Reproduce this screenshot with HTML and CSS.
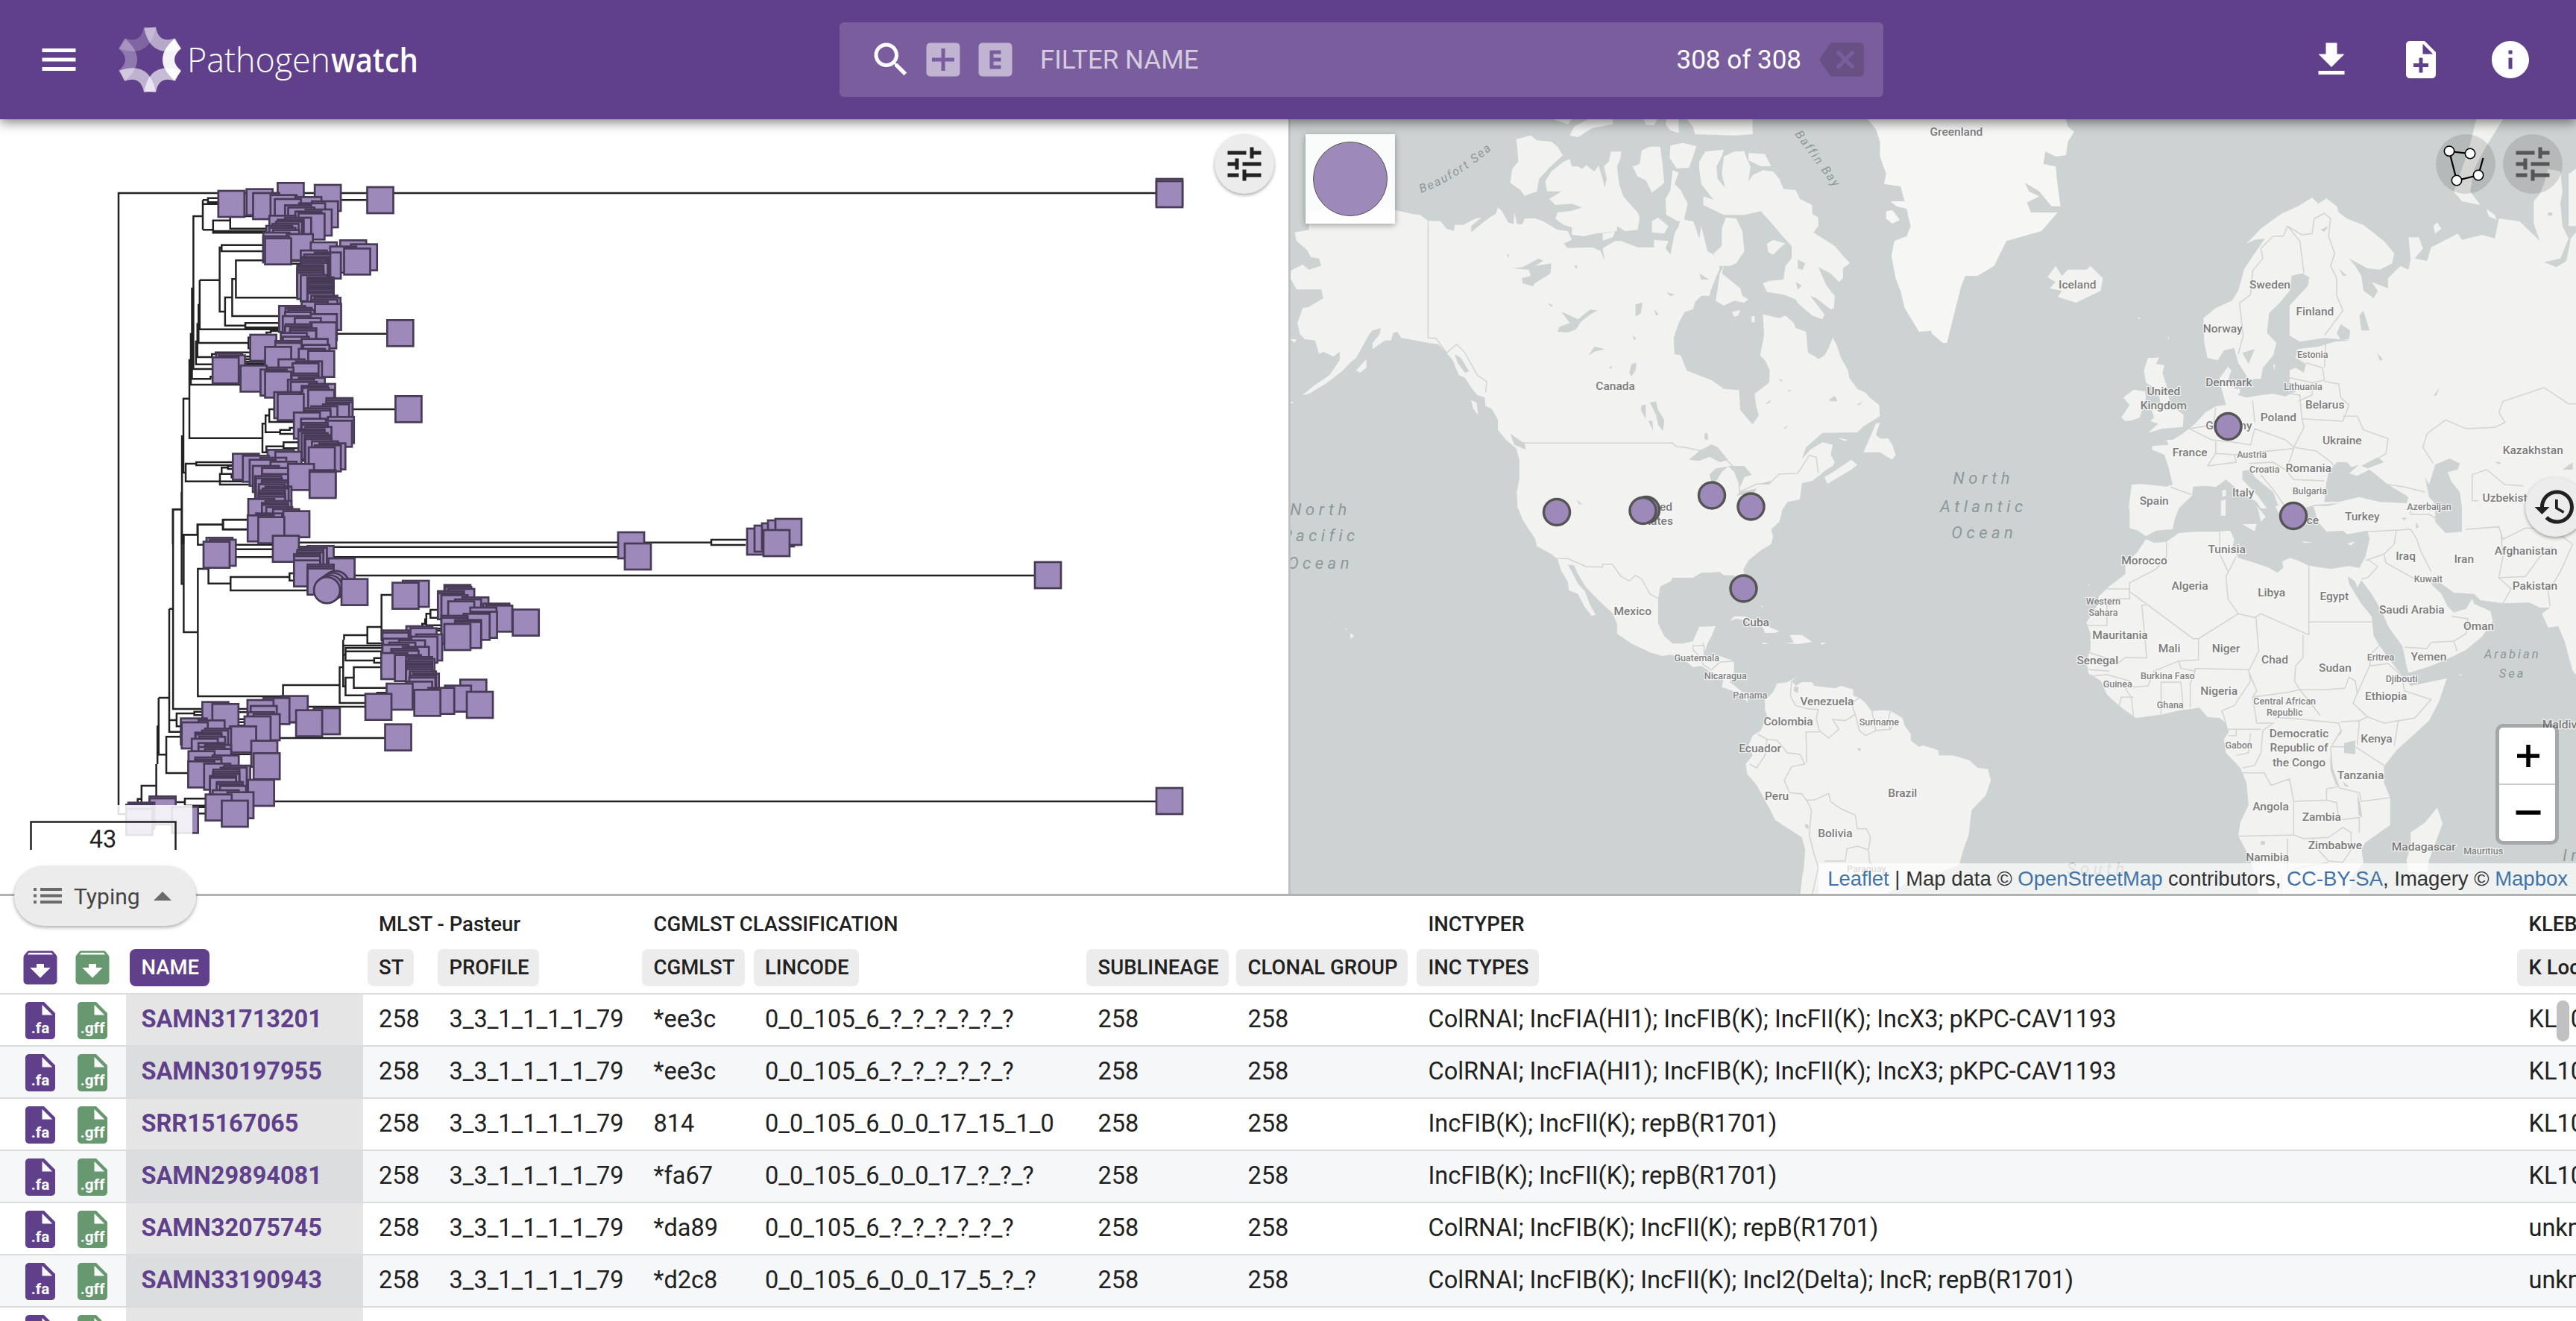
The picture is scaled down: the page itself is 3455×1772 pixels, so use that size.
FILE: index.html
```html
<!DOCTYPE html>
<html lang="en">
<head>
<meta charset="utf-8">
<title>Pathogenwatch</title>
<link rel="stylesheet" href="styles.css">
</head>
<body>
<header class="topbar">
  <svg class="icon menu" viewBox="0 0 24 24"><path d="M3 18h18v-2H3v2zm0-5h18v-2H3v2zm0-7v2h18V6H3z"/></svg>
  <svg class="logo" viewBox="155 30 410 100">
    <g fill="#fff">
      <path opacity=".3" d="M159 65Q177 80 159 95L168 108Q200 80 168 52Z"/>
      <path opacity=".2" transform="rotate(60 201 80)" d="M159 65Q177 80 159 95L168 108Q200 80 168 52Z"/>
      <path opacity=".55" transform="rotate(120 201 80)" d="M159 65Q177 80 159 95L168 108Q200 80 168 52Z"/>
      <path opacity=".93" transform="rotate(180 201 80)" d="M159 65Q177 80 159 95L168 108Q200 80 168 52Z"/>
      <path opacity=".65" transform="rotate(240 201 80)" d="M159 65Q177 80 159 95L168 108Q200 80 168 52Z"/>
      <path opacity=".6" transform="rotate(300 201 80)" d="M159 65Q177 80 159 95L168 108Q200 80 168 52Z"/>
    </g>
    <text class="brand thin" x="251" y="97" textLength="192" lengthAdjust="spacingAndGlyphs">Pathogen</text>
    <text class="brand strong" x="444" y="97" textLength="117" lengthAdjust="spacingAndGlyphs">watch</text>
  </svg>
  <div class="search">
    <svg class="icon" viewBox="0 0 24 24"><path d="M15.5 14h-.79l-.28-.27C15.41 12.59 16 11.11 16 9.5 16 5.91 13.09 3 9.5 3S3 5.91 3 9.5 5.91 16 9.5 16c1.61 0 3.09-.59 4.23-1.57l.27.28v.79l5 4.99L20.49 19l-4.99-5zm-6 0C7.01 14 5 11.99 5 9.5S7.01 5 9.5 5 14 7.01 14 9.5 11.99 14 9.5 14z"/></svg>
    <svg class="icon key" viewBox="0 0 24 24"><path fill-rule="evenodd" d="M5 3h14a2 2 0 0 1 2 2v14a2 2 0 0 1-2 2H5a2 2 0 0 1-2-2V5a2 2 0 0 1 2-2zM11 6v5H6v2h5v5h2v-5h5v-2h-5V6z"/></svg>
    <svg class="icon key" viewBox="0 0 24 24"><path fill-rule="evenodd" d="M5 3h14a2 2 0 0 1 2 2v14a2 2 0 0 1-2 2H5a2 2 0 0 1-2-2V5a2 2 0 0 1 2-2zM9 7v10h6v-2h-4v-2h4v-2h-4V9h4V7z"/></svg>
    <span class="placeholder">FILTER NAME</span>
    <span class="count">308 of 308</span>
    <svg class="icon clear" viewBox="0 0 24 24"><path d="M22 3H7c-.69 0-1.12.35-1.5.88L0 12l5.5 8.11c.38.53.81.89 1.5.89h15a2 2 0 0 0 2-2V5a2 2 0 0 0-2-2m-3 12.59L17.59 17 14 13.41 10.41 17 9 15.59 12.59 12 9 8.41 10.41 7 14 10.59 17.59 7 19 8.41 15.41 12"/></svg>
  </div>
  <nav class="actions">
    <svg class="icon" viewBox="0 0 24 24"><path d="M19 9h-4V3H9v6H5l7 7 7-7zM5 18v2h14v-2H5z"/></svg>
    <svg class="icon" viewBox="0 0 24 24"><path d="M14 2H6c-1.1 0-1.99.9-1.99 2L4 20c0 1.1.89 2 1.99 2H18c1.1 0 2-.9 2-2V8l-6-6zm2 14h-3v3h-2v-3H8v-2h3v-3h2v3h3v2zm-3-7V3.5L18.500 9H13z"/></svg>
    <svg class="icon" viewBox="0 0 24 24"><path d="M12 2C6.480 2 2 6.480 2 12s4.480 10 10 10 10-4.480 10-10S17.520 2 12 2zm1 15h-2v-6h2v6zm0-8h-2V7h2v2z"/></svg>
  </nav>
</header>

<main class="panes">
  <section class="tree">
    <svg class="canvas" viewBox="0 160 1728 1039">
      <g class="branches">
        <path d="M1551 259H159V1092H172M402 727.700H954V724H1005M954 727.700V731H1000M402 733.700H830M430 747.300H838M460 772H1388M365 1075H1551"/>
        <path transform="translate(140 230) scale(.38265 .33333)" d="M345 115V235M345 180H312V467M345 115H363V107H398M363 115V124H398M345 131H398M490 88V180H520M345 235H381V247H560M381 235V197H441V185M441 197V230H566M381 240H566M307 467V650M303 650V858H480M312 467V795H380M307 650V835H372V826H380M334 437V635H610M334 437H404V306H411V296H556M411 306V321H556M404 437V564H423V507H448V433H461V358H556M461 433V508H680M448 507V582H611M423 564V620H494V610H611M494 620V628H611M330 533V690H505V668H510M505 690V712H510M326 610V747H377V735H390V728H510M321 680V776H380M298 755V1073H554V1015H565V982H578V957H595M578 982V1008H663M565 1015V1049H616V1040H650V1032H663M616 1049V1056H663M554 1073V1130H570M568 1130V1106H628V1090H680M628 1106V1114H680M298 914H277V1212H285V1176H322V1170H449M322 1176V1182H449M285 1212V1247H484M405 1247V1217H411V1192H433V1185H449M411 1217H446V1235M433 1192V1197H449M405 1247V1260H510M272 1062V1500M272 1360H240V1500M277 1500V1462H326V1421H415V1402H503M415 1421V1440H503M568 655V648H583V642H611M829 115H920M815 653H990M870 957H1019M490 745H562M490 755H562M490 765H562M490 773H562M655 360H690M655 371H690M690 1163H703"/>
        <path transform="translate(140 660) scale(.39541 .33333)" d="M262 0V370H269M269 172V564H317V309H353V368H428V342H628V327H642M628 342V356H642M428 368V396H690M269 172H317V131H403V111H486M403 131V151H486M317 172V212H345M440 212H570M440 230H570M440 262H570M660 221H690M233 70V873H331M262 70H233M220 470V965H260M233 470H220M184 828V1057H210V985H258M210 1057V1131H283M220 828H184M220 918H245V891H305V884H331M305 891V898H331M245 918V943H260M180 943V1095M176 1095V1222M184 943H178M176 1182H126V1235H113V1250M126 1235V1250M317 564V822H606V777H798V705H810V595M798 705V849H884M810 595V782H818V747H846V705H938M846 747V788H956M818 782V818H884M810 655H818V628H942M818 655V678H915V668H938M915 678V687H938M818 641H942M810 618H942M813 595V576H892V543H940V414H974M892 576V609H942M940 543V600M690 864H884M595 990H951M455 873H484M455 886H484M455 914H474M455 926H474M455 940H474M432 1055H497M625 928H650M1078 540V530H1088V512H1092V490H1106V474H1130M1106 490V506H1130M1092 512V536H1142M1120 550H1142M1120 558H1142M242 1248H273V1234H342M273 1248V1262H342M300 1268H342M300 1294H342M925 812V808H956"/>
      </g>
      <g id="leaves" class="leaves"></g>
      <rect class="veil" x="0" y="1080" width="258" height="72"/>
      <path class="scale" d="M41.500 1140V1102.500H235.500V1140"/>
      <text class="scale-text" x="138" y="1137">43</text>
    </svg>
    <div class="round tree-settings"><svg class="icon" viewBox="0 0 24 24"><path d="M3 17v2h6v-2H3zM3 5v2h10V5H3zm10 16v-2h8v-2h-8v-2h-2v6h2zM7 9v2H3v2h4v2h2V9H7zm14 4v-2H11v2h10zm-6-4h2V7h4V5h-4V3h-2v6z"/></svg></div>
  </section>

  <section class="map">
    <svg class="canvas" viewBox="1731 160 1724 1039">
      <g class="land" transform="translate(1728 160) scale(.55102 .33333)">
        <path d="M50 370V445L15 455L20 490L45 525L55 555L75 560L80 590L50 605L35 585L10 605L2 615L5 640L20 685L80 685L85 720L50 755L35 760L22 820L28 865L40 885L65 890L75 945L85 935L110 955L125 935L125 970L100 1030L60 1075L35 1110L50 1105L90 1065L130 1015L150 980L165 960L175 930L185 900L195 870L205 850L225 840L222 865L205 900L205 925L235 890L250 890L255 860L265 855L275 880L310 890L340 900L365 905L385 940L400 970L415 1030L430 1040L445 1080L460 1110L478 1120L480 1155L495 1165L510 1210L510 1250L530 1290L555 1325L562 1370L562 1450L556 1500L558 1566L1205 1566L1215 1540L1245 1530L1250 1465L1275 1455L1295 1430L1305 1415L1325 1395L1330 1380L1320 1350L1325 1310L1300 1300L1270 1330L1250 1368L1260 1320L1300 1262L1385 1260L1400 1235L1440 1195L1438 1150L1415 1120L1405 1100L1385 1085L1365 1040L1362 1010L1345 960L1335 910L1325 880L1315 920L1305 950L1290 965L1278 950L1265 940L1262 890L1260 855L1235 840L1230 820L1210 790L1195 800L1155 785L1158 870L1148 950L1160 970L1172 1010L1170 1060L1135 1105L1138 1150L1145 1190L1130 1228L1120 1210L1100 1170L1097 1090L1060 1085L1030 1050L970 1012L955 950L940 945L938 880L950 820L965 775L985 765L990 735L1005 710L1025 710L1030 680L1050 600L1035 545L1020 530L1005 430L1000 480L990 430L985 410L965 405L960 370L950 430L940 460L930 545L918 520L925 490L890 485L890 515L850 515L810 490L795 490L765 520L770 570L760 530L740 515L680 518L670 500L690 485L680 450L655 445L620 410L600 398L575 400L570 422L557 422L550 375L548 422L535 415L520 370L510 355L505 380L490 395L470 420L445 455L445 430L470 395L455 400L425 425L405 425L403 450L385 440L370 410L340 408L320 385L300 380L230 355Z"/>
        <path d="M685 160L690 190L705 190L715 200L725 185L745 210L755 185L765 240L770 275L775 240L768 190L780 170L785 130L810 130L808 160L800 190L805 260L815 310L850 375L855 395L850 445L820 450L800 430L800 450L750 460L720 470L690 465L690 435L670 425L650 400L655 375L690 368L715 355L690 340L650 345L635 320L665 290L630 290L625 250L640 210L670 170ZM555 80L590 65L605 85L640 90L655 110L668 145L635 195L610 240L605 290L575 308L565 285L540 255L545 200L560 170ZM855 180L838 190L850 230L870 245L885 295L905 270L915 255L910 170L905 110L880 110L860 125ZM930 105L960 95L993 108L985 150L975 195L945 198L928 155ZM935 205L950 215L940 260L955 285L972 340L965 390L950 412L920 385L918 320L930 285ZM1120 135L1160 140L1175 188L1150 190L1120 165ZM1065 395L1090 400L1105 450L1110 530L1090 580L1075 590L1045 590L1035 540L1055 510L1055 440ZM1060 590L1055 620L1100 680L1105 710L1120 725L1110 738L1085 730L1060 750L1040 730L1045 680L1050 620ZM1080 775L1100 768L1095 790L1085 795ZM1165 500L1180 485L1210 500L1195 520L1180 545L1168 535ZM885 410L900 395L925 430L915 460L885 455ZM765 460L795 452L790 475L765 488ZM1127 795L1135 790L1135 815L1128 818Z"/>
        <path d="M1000 170L1015 130L1060 122L1055 150L1042 190L1045 240L1065 280L1065 290L1055 220L1060 150L1085 130L1110 128L1115 155L1125 190L1120 250L1130 225L1155 205L1180 210L1195 240L1205 280L1235 285L1245 320L1275 345L1275 380L1290 395L1290 430L1278 455L1330 510L1350 550L1367 578L1350 600L1350 640L1340 655L1320 620L1290 595L1310 670L1330 710L1328 760L1320 765L1285 720L1270 710L1305 785L1300 805L1275 790L1240 740L1235 725L1205 705L1165 695L1155 660L1170 650L1205 645L1210 590L1225 560L1225 510L1200 465L1180 425L1150 370L1110 385L1060 385L1010 345L1010 310L1035 325L1005 260L1000 200Z"/>
        <path d="M685 65L695 30L730 0H790V20L740 35L705 72ZM645 0H690L680 20ZM865 0H898L890 25L870 22ZM920 0H950V55L930 45L918 20ZM970 0H1130V60L1090 65L990 60L985 30Z"/>
        <path class="north" d="M1410 0L1430 40L1440 90L1440 150L1455 220L1450 260L1490 270L1500 330L1465 330L1480 350L1505 360L1510 400L1515 430L1505 470L1475 490L1468 550L1478 640L1490 690L1500 760L1515 800L1535 855L1575 850V0ZM1455 370L1470 365L1488 405L1470 420L1455 400Z"/>
        <path d="M1440 1220L1430 1225L1400 1340L1440 1340L1470 1370L1478 1350L1470 1310L1460 1285L1440 1285L1430 1270ZM1312 1468L1305 1440L1330 1415L1370 1370L1385 1390L1370 1410ZM2 1135L12 1138L8 1145ZM5 885L20 885L15 900ZM165 1010L190 965L190 1000L175 1020ZM445 1130L458 1140L462 1190L450 1165ZM1335 1280L1362 1290L1355 1295Z"/>
        <g class="lake">
          <path d="M975 1370L1000 1335L1030 1308L1045 1320L1070 1370L1050 1380L1025 1358L1000 1375ZM1030 1460L1025 1430L1040 1405L1070 1397L1055 1420L1040 1460ZM1070 1395L1110 1395L1128 1430L1110 1440L1100 1480L1085 1420ZM1090 1515L1100 1500L1140 1485L1135 1500ZM1140 1470L1175 1455L1170 1468ZM880 1140L895 1135L900 1170L915 1210L912 1255L900 1230L895 1190ZM860 1150L870 1150L870 1205L858 1170ZM876 1212L886 1215L888 1255ZM545 600L570 595L610 560L620 570L600 590L640 580L638 620L600 660L595 672L570 660L568 640L590 630L585 605ZM655 855L660 835L685 820L665 775L705 805L735 765L752 770L735 785L712 815L700 845L680 858ZM730 950L745 915L770 925L745 935ZM835 1035L830 1020L835 985L847 980L845 1010ZM845 795L845 745L862 738L858 780ZM890 765L902 785L895 790ZM920 695L940 705L930 712ZM1000 620L1025 645L1005 645ZM630 738L645 750L640 755ZM1240 565L1258 580L1252 605L1240 600ZM1235 655L1250 670L1240 685ZM1160 1145L1175 1128L1170 1142ZM1215 1088L1225 1092L1218 1095ZM1315 1130L1330 1112L1337 1135L1322 1135ZM1383 1150L1400 1132L1390 1150ZM1205 1245L1218 1228L1210 1245ZM1193 1045L1203 1050L1200 1057ZM1013 1265L1020 1262L1022 1290L1013 1288ZM695 590L703 588L702 603ZM532 543L538 545L536 557ZM838 870L846 880L842 892ZM780 1003L787 990L787 1003ZM700 1530L715 1548L708 1550ZM405 945L420 960L440 1015L430 1020L412 980ZM540 1265L575 1305L578 1330L550 1310Z"/>
        </g>
        <path class="border" d="M340 408V880L360 882L385 940L410 905L430 940L460 1030L483 1055L480 1100M570 1303H935L945 1318L965 1320L1000 1333L1020 1325L1065 1370L1095 1415L1098 1500L1140 1468H1170L1195 1427L1240 1425L1268 1352L1285 1360L1290 1425"/>
      </g>

      <g class="land" transform="translate(1728 680) scale(.55102 .33333)">
        <path d="M557 -4L570 50L585 90L600 125L605 158L640 190L655 210L665 260L680 300L683 335L705 350L720 400L738 438L748 435L735 395L722 340L705 310L690 260L680 232L695 235L705 270L725 325L755 375L790 430L800 470L800 510L835 550L880 585L910 600L930 595L960 610L985 645L1005 640L1030 665L1060 690L1055 725L1090 745L1120 788L1115 765L1150 760L1160 775L1160 815L1165 840L1150 900L1130 920L1120 960L1130 1000L1113 1035L1117 1075L1140 1120L1170 1210L1185 1260L1250 1330L1258 1380L1255 1450L1250 1500L1246 1560H1450L1500 1520L1575 1500V975L1545 960L1535 965L1515 940L1515 915L1500 880L1495 850L1465 820L1440 818L1420 822L1405 790L1390 768L1375 760L1375 735L1345 720L1330 730L1280 720L1275 705L1250 705L1235 720L1225 700L1240 682L1215 705L1190 710L1180 745L1165 770L1150 750L1130 755L1105 745L1075 705L1085 660L1085 620L1050 600L1010 600L1020 550L1030 520L1040 480L1000 482L985 540L960 550L935 550L915 520L900 470L900 370L905 320L930 300L935 285L985 285L1005 265L1050 262L1060 275L1085 275L1100 320L1112 330L1108 250L1120 215L1150 175L1175 150L1180 120L1175 90L1195 60L1205 -4Z"/>
        <path d="M1075 460L1085 440L1110 440L1165 480L1195 500L1185 507L1160 507L1155 485L1110 455L1090 450ZM1220 515L1250 515L1275 543L1240 552L1205 547L1230 545ZM1153 545L1172 550L1155 553ZM1295 545L1310 548L1298 554ZM150 508L160 518L152 532ZM138 487L144 493L141 494ZM100 461L104 464L100 465ZM1151 395L1155 400L1153 408Z"/>
        <path class="lake" d="M1232 722L1242 725L1240 750L1230 740ZM1258 1275L1266 1280L1266 1297L1258 1290ZM1384 972L1393 970L1392 985Z"/>
        <path class="border" d="M650 208H680L725 240L765 242V230H788L810 280L830 298L845 275L860 290L880 350L905 373M985 575V558H1012V600M1010 545V558M985 575L1000 600L1010 635L1030 655L1050 625L1085 620M1225 700L1222 760L1235 800L1265 812L1290 815L1285 850L1292 900L1315 930L1340 895L1325 855L1355 860L1380 835L1370 790L1390 768M1380 835L1390 900L1405 920L1430 900L1465 895L1480 860M1420 822L1425 860L1430 900M1465 820L1460 860L1465 895M1143 915L1165 935L1190 940L1215 990L1245 995L1257 1035L1225 1045L1207 1100L1220 1150L1250 1155L1260 1180H1280L1315 1153L1320 1185L1345 1215L1380 1240L1385 1295H1407L1417 1330L1412 1380L1385 1365L1360 1375L1355 1425L1305 1425M1292 905H1260L1262 1030M1165 935L1160 1000L1140 1050L1123 1035M1262 1180L1273 1220L1268 1320L1280 1400L1290 1450L1275 1560M1412 1380L1415 1430L1440 1470L1430 1530"/>
      </g>

      <g class="land" transform="translate(2592 160) scale(.55038 .33333)">
        <path class="north" d="M-3 0H325L330 30L345 50L330 90L325 145L300 150L275 130L270 180L300 190L305 270L312 350L290 350L260 290L225 255L235 290L260 310L230 335L240 375L305 375L265 450L180 490L150 590L110 630L80 630L70 670L50 800L35 900L25 900L-3 860Z"/>
        <path d="M280 635L300 590L315 630L330 605L375 605L385 590L415 640L410 690L350 738L305 715L315 690L285 680L300 655Z"/>
        <path d="M660 800L690 760L730 730L745 690L760 600L785 540L810 480L785 485L765 500L800 440L850 380L890 350L925 315L940 340L960 318L985 350L990 375L1010 400L1050 425L1100 490L1125 540L1120 580L1090 605L1060 600L1015 560L1030 590L1045 630L1050 690L1075 720L1085 690L1070 655L1110 680L1110 640L1140 590L1160 605L1165 565L1160 475L1185 475L1195 520L1175 560L1205 570L1215 515L1245 490L1280 460L1290 485L1340 465L1370 480L1375 440L1380 400L1430 410L1480 490L1465 420L1465 330L1480 300L1490 260L1500 200L1530 210L1535 290L1530 340L1535 430L1550 480L1530 560L1490 575L1520 595L1545 570L1555 480L1575 440V1566H478L485 1470L510 1468L570 1478L585 1470L575 1400L565 1350L535 1330L535 1315L575 1310L570 1290L585 1290L610 1265L640 1225L665 1180L690 1155L715 1150L705 1090L700 1040L720 995L728 1010L720 1050L735 1080L745 1110L765 1120L800 1110L830 1105L860 1115L885 1095L890 1085L870 1080L870 1010L885 1000L905 1020L910 985L885 960L890 925L940 915L980 895L1020 890L955 880L895 895L870 870L870 750L915 670L918 635L900 620L875 630L870 690L845 740L820 780L815 860L838 900L830 950L805 1000L800 1045L770 1045L745 980L735 920L710 930L695 970L670 960L662 900Z"/>
        <path d="M540 960L525 960L515 1010L520 1060L550 1090L555 1140L530 1150L540 1200L530 1215L550 1225L525 1262L560 1245L610 1238L612 1190L580 1150L570 1070L560 1020L565 990L545 985L552 958ZM470 1215L460 1200L480 1150L465 1120L490 1088L518 1095L520 1120L505 1200L485 1212ZM1325 0H1390L1360 80L1345 120L1320 200L1310 290L1335 345L1290 330L1270 290L1290 200L1310 100ZM1350 360L1370 385L1375 405L1355 390ZM1220 430L1230 415L1240 440L1225 460ZM1550 220L1575 190V430H1550ZM830 990L835 985L833 1010ZM735 1085L750 1085L748 1105L735 1100ZM573 875L577 878L575 888ZM500 797L506 797L504 805Z"/>
        <path class="lake" d="M600 1566L632 1515L635 1478L665 1475L690 1480L715 1450L750 1500L790 1540L800 1566ZM755 1415L775 1410L785 1440L830 1500L845 1566H815L790 1510L755 1450ZM905 1566L930 1552L990 1545L945 1566ZM960 1460L965 1420L985 1380L1010 1380L1020 1400L1040 1390L1015 1425L1035 1435L1065 1410L1110 1470L1160 1520L1155 1545L1090 1540L1040 1520L990 1540L955 1540ZM1045 1395L1085 1360L1100 1380L1060 1405ZM1210 1470L1225 1390L1260 1365L1285 1385L1280 1410L1255 1420L1265 1460L1285 1500L1290 1566H1235L1210 1520L1200 1440ZM985 860L995 825L1018 850L1015 885L995 888ZM1040 790L1050 770L1065 850L1045 850ZM1083 940L1097 965L1090 972ZM1220 1115L1236 1078L1228 1110ZM990 600L1010 630L1000 630ZM755 940L785 925L770 985ZM1500 375H1510V388H1500ZM1370 1378L1385 1380L1380 1390ZM945 445L965 430L955 452ZM1535 1410L1560 1380V1410Z"/>
        <path d="M706 1495L715 1490L715 1515L706 1520ZM703 1535L714 1530V1566H703Z"/>
        <path class="border" d="M745 945L757 870L748 740L775 705L780 610L805 560L800 520L830 470L855 470L865 430L900 465L925 460L930 400L955 378L970 400L965 470L980 540L970 590L985 640L985 710L1000 770L955 870M865 430L895 490L905 620M780 1130L785 1220M880 1320L905 1240L900 1205L895 1110L860 1100M910 980L950 1000L955 1050L925 1060L870 1040M955 1055L990 1065L995 1120L1015 1150L1000 1215L900 1205M925 1060L925 1110L890 1135M955 1000L958 905M1000 1195L1035 1195L1050 1250L1110 1285L1105 1345L1080 1370M690 1160L685 1230L625 1245L680 1290L735 1300L775 1310L785 1245L860 1290L880 1320L935 1335L975 1385L980 1410M690 1290L690 1345L735 1350L820 1335L880 1325M670 1395L690 1345M735 1350L740 1380L670 1395M580 1480L630 1510M770 1385L830 1380L860 1410L880 1450L955 1455M880 1325L865 1400M800 1430L830 1490L860 1560M1220 1385L1195 1320L1205 1265L1250 1210L1300 1245L1370 1240L1395 1220L1380 1180L1390 1135L1490 1080L1550 1145H1572M1315 1535V1430L1350 1410L1395 1470L1440 1475M1110 1470L1150 1480L1200 1500M1315 1535H1330"/>
      </g>

      <g class="land" transform="translate(2592 680) scale(.55038 .33333)">
        <path d="M480 -4V85L500 95L520 118L545 95L585 90L590 50L602 -4ZM703 -2H714V35L703 35ZM755 70L790 68L785 98ZM790 -4L812 40L800 60L795 20ZM835 -4L850 45L880 90L890 40L910 -4ZM900 138L928 143L905 145ZM1010 148L1030 138L1020 155ZM1283 673L1293 676L1285 679ZM378 310L383 315L380 318ZM1230 1210L1243 1275L1210 1420L1205 1470H1160L1155 1420L1165 1370L1165 1310L1200 1270ZM-3 970L15 980L15 1000L50 1000L90 1020L110 1050L135 1055L142 1100L130 1160L95 1220L88 1320L75 1380L65 1440L20 1470L-3 1500Z"/>
        <path d="M928 -4L940 60L960 100L1000 95L1010 110L1060 95L1065 130L1055 200L1040 245L1015 238L970 250L930 240L915 235L890 215L870 205L852 220L855 245L840 265L820 245L785 225L745 205L740 190L730 170L735 130L725 95L690 100L640 100L600 105L570 140L540 145L520 130L500 180L470 230L470 270L430 320L405 360L400 400L375 465L385 510L385 570L375 620L380 670L410 700L425 755L455 800L495 850L560 835L600 820L650 808L670 845L700 850L715 870L722 905L710 935L715 990L750 1050L765 1110L770 1200L750 1270L745 1325L770 1400L780 1450L795 1560H1015L1025 1480L1050 1430L1045 1375L1055 1350L1115 1280L1115 1170L1100 1110L1100 1045L1130 980L1210 860L1235 780L1253 690L1210 705L1165 720L1150 690L1130 650L1090 560L1075 520L1070 440L1045 390L1015 310L1012 278L1030 300L1035 325L1045 295L1070 350L1095 420L1110 480L1145 560L1155 640L1160 668L1215 640L1270 600L1300 575L1340 520L1365 460L1360 420L1320 390L1315 370L1300 410L1270 425L1255 400L1240 350L1215 310L1225 290L1250 320L1270 345L1320 350L1335 375L1390 388L1455 385L1480 405L1505 405L1485 430L1500 485L1525 480L1540 540L1560 660L1575 690V-4Z"/>
        <path class="lake" d="M1225 -4H1290V100L1250 105L1225 60ZM1003 950L1030 940L1030 995L1003 990ZM968 1000L975 1050L990 1120L983 1120L970 1060ZM1035 1150L1043 1200L1047 1250L1038 1240ZM985 925L1000 895L995 915ZM1000 1105L1015 1125L1005 1125ZM800 1345H810V1360H800ZM1143 45L1155 42L1150 55ZM1178 60L1185 80L1178 88Z"/>
        <path class="border" d="M570 140V200L545 250L480 305V370H425V478H375M425 330H480V340L635 530H648L745 430L785 445L800 430L917 515V235M745 430L720 370L715 280L740 200M700 100V190L720 260M917 463H1070M903 515V605L885 640L882 700L895 735L870 745L780 765M788 445L795 580L770 660L790 740L780 765M520 395H510L522 608L470 605L455 625L380 585M380 655L430 660M385 680L425 675L480 700L490 725M455 800L460 765L490 765M490 850L485 770L470 730M648 530V615L600 620L540 660L525 720L490 725M600 620L605 650L640 660L640 650L770 655M640 660L628 710V808M605 705H557V835M605 705L612 820M770 655L775 700L735 800L705 820L715 870M780 765L790 870L830 870L805 900L800 990L785 1040L755 1050M835 850L870 850L990 870L995 900L970 970L975 1070L990 1125L960 1135V1180L880 1185V1320L745 1325M895 735L945 840M720 895H800M720 920H740V895M740 1000L770 990L775 910M755 1070H808L825 1120L870 1095L880 1185M960 1180L985 1190L990 1260L1040 1250V1310M990 1130L1040 1150L1045 1185L1115 1170M970 965H1030L1105 1045M995 865L1040 860L1035 960M1040 860L1060 845L1100 870L1135 860L1125 960M1035 750L1025 790L1060 845M1135 860L1175 850L1215 775L1150 740L1145 695M1065 640L1110 630L1150 690M895 735L960 735L1005 730L1015 685L1030 700L1035 750L1065 640L1070 590L1090 555M880 1320L905 1335L965 1330L1000 1290L1020 1310L1020 1380L1000 1430L965 1425L940 1380L925 1335M865 1335V1470L900 1450L965 1430M850 1470V1560M1045 290L1060 285L1085 240L1060 210M1055 215L1100 190L1125 150L1130 95M1060 100L1165 90L1180 130L1190 180L1215 260M1100 190L1105 225L1175 290M1265 440L1305 450L1300 510L1270 540L1215 545L1205 570L1150 565M1270 540L1278 580M1300 90L1380 80L1390 130L1445 85L1510 90L1560 150L1530 260L1500 340L1505 400M1390 388L1410 330L1380 285L1390 200L1385 100M1380 285L1445 280L1480 200L1510 160M1165 -2L1165 30L1210 30L1230 50"/>
      </g>

      <path id="beaufort" d="M1906 259Q1956 240 2001 200" fill="none"/>
      <path id="baffin" d="M2407 180L2463 256" fill="none"/>
      <text class="sea-small"><textPath href="#beaufort">Beaufort Sea</textPath></text>
      <text class="sea-small"><textPath href="#baffin">Baffin Bay</textPath></text>
      <g id="labels"></g>
      <g class="cases">
        <circle cx="2088" cy="687" r="17.500"/><circle cx="2208" cy="684" r="17.500"/><circle cx="2203.500" cy="685" r="17.500"/>
        <circle cx="2296" cy="664.500" r="17.500"/><circle cx="2348.500" cy="679.500" r="17.500"/><circle cx="2338.500" cy="789.500" r="17.500"/>
        <circle cx="2988.500" cy="572" r="17.500"/><circle cx="3076" cy="692" r="17.500"/>
      </g>
    </svg>
    <div class="legend"><i></i></div>
    <div class="round ghost lasso"><svg viewBox="0 0 80 80"><g fill="#fff" stroke="#000" stroke-width="1.600"><path fill="none" stroke-width="2.200" d="M46 26L18 23L28 62L57 55L63.500 32"/><circle cx="18" cy="22.700" r="6.700"/><circle cx="46" cy="26" r="6.700"/><circle cx="57" cy="55" r="6.700"/><circle cx="28" cy="62" r="6.700"/></g></svg></div>
    <div class="round ghost map-settings"><svg class="icon" viewBox="0 0 24 24"><path d="M3 17v2h6v-2H3zM3 5v2h10V5H3zm10 16v-2h8v-2h-8v-2h-2v6h2zM7 9v2H3v2h4v2h2V9H7zm14 4v-2H11v2h10zm-6-4h2V7h4V5h-4V3h-2v6z"/></svg></div>
    <div class="round history"><svg class="icon" viewBox="0 0 24 24"><path d="M13 3c-4.970 0-9 4.030-9 9H1l3.890 3.890.07.14L9 12H6c0-3.870 3.130-7 7-7s7 3.130 7 7-3.130 7-7 7c-1.930 0-3.680-.79-4.940-2.060l-1.420 1.420C8.270 19.990 10.510 21 13 21c4.970 0 9-4.030 9-9s-4.030-9-9-9zm-1 5v5l4.280 2.540.72-1.210-3.500-2.080V8H12z"/></svg></div>
    <div class="zoom"><svg viewBox="0 0 75 75"><path d="M24 38H54M39 23V53"/></svg><svg viewBox="0 0 75 75"><path d="M22.500 37H55.500"/></svg></div>
    <div class="attribution"><a>Leaflet</a> | Map data © <a>OpenStreetMap</a> contributors, <a>CC-BY-SA</a>, Imagery © <a>Mapbox</a></div>
  </section>
</main>

<section class="data">
  <div class="picker">
    <svg viewBox="0 0 38 22"><path d="M0 0h4v4H0zM9 0h29v4H9zM0 8.500h4v4H0zM9 8.500h29v4H9zM0 17h4v4H0zM9 17h29v4H9z"/></svg>
    <span>Typing</span>
    <i class="caret"></i>
  </div>
  <div class="grid groups"><b></b><b></b><b class="st">MLST - Pasteur</b><b></b><b>CGMLST CLASSIFICATION</b><b></b><b></b><b></b><b>INCTYPER</b><b>KLEBORATE</b></div>
  <div class="grid chips">
    <div class="files">
      <svg class="icon fa" viewBox="0 0 24 24"><path d="M20.540 5.230l-1.390-1.680C18.880 3.210 18.470 3 18 3H6c-.47 0-.88.21-1.160.55L3.460 5.230C3.170 5.570 3 6.020 3 6.500V19c0 1.100.9 2 2 2h14c1.100 0 2-.9 2-2V6.500c0-.48-.17-.93-.46-1.270zM12 17.500L6.500 12H10v-2h4v2h3.500L12 17.500zM5.120 5l.81-1h12l.94 1H5.120z"/></svg>
      <svg class="icon gff" viewBox="0 0 24 24"><path d="M20.540 5.230l-1.390-1.680C18.880 3.210 18.470 3 18 3H6c-.47 0-.88.21-1.160.55L3.460 5.230C3.170 5.570 3 6.020 3 6.500V19c0 1.100.9 2 2 2h14c1.100 0 2-.9 2-2V6.500c0-.48-.17-.93-.46-1.270zM12 17.500L6.500 12H10v-2h4v2h3.500L12 17.500zM5.120 5l.81-1h12l.94 1H5.120z"/></svg>
    </div>
    <div class="name-head"><b class="chip active">NAME</b></div>
    <div class="st"><b class="chip">ST</b></div>
    <div><b class="chip">PROFILE</b></div>
    <div><b class="chip">CGMLST</b></div>
    <div><b class="chip">LINCODE</b></div>
    <div><b class="chip">SUBLINEAGE</b></div>
    <div><b class="chip">CLONAL GROUP</b></div>
    <div><b class="chip">INC TYPES</b></div>
    <div><b class="chip">K Locus</b></div>
  </div>
  <div id="rows"></div>
  <i class="thumb"></i>
</section>
<script src="app.js"></script>
</body>
</html>
```
FILE: styles.css
```css
* { box-sizing: border-box; }
html, body { margin: 0; height: 1772px; overflow: hidden; }
body { width: 3455px; display: flex; flex-direction: column; background: #fff; color: #212121; font: 32.5px Roboto, "Liberation Sans", sans-serif; }
svg { display: block; flex: none; }
.icon { width: 60px; height: 60px; fill: currentColor; }

.topbar { flex: none; height: 160px; display: flex; align-items: center; padding: 0 58px 0 49px; background: #603f8b; color: #fff; position: relative; z-index: 2; box-shadow: 0 5px 14px rgba(0,0,0,.45); }
.logo { width: 410px; height: 100px; margin-left: 46px; overflow: visible; }
.brand { fill: #fff; font-family: "Open Sans", "Noto Sans", sans-serif; font-size: 46px; }
.thin { font-weight: 300; }
.strong { font-weight: 600; }
.search { width: 1400px; height: 100px; margin-left: 561px; padding: 0 26px 0 39px; display: flex; align-items: center; gap: 10px; background: rgba(255,255,255,.16); border-radius: 6px; }
.search .key { color: rgba(255,255,255,.54); }
.search .clear { color: rgba(33,33,33,.2); margin-left: 14px; }
.placeholder { flex: 1; margin-left: 20px; font-size: 35px; color: rgba(255,255,255,.7); }
.count { font-size: 35px; }
.actions { margin-left: auto; display: flex; gap: 60px; }

.panes { flex: none; display: flex; height: 1042px; border-bottom: 3px solid #b2b2b2; }
.tree { width: 1731px; position: relative; border-right: 3px solid #bfc1c1; }
.map { width: 1724px; position: relative; overflow: hidden; background: #cdd3d3; }
.canvas { width: 100%; height: 1039px; }
.branches path { fill: none; stroke: #222; stroke-width: 2.500px; vector-effect: non-scaling-stroke; }
.leaves rect, .leaves circle { fill: #9d89ba; stroke: #473b57; stroke-width: 2.700px; }
.veil { fill: rgba(255,255,255,.86); }
.scale { fill: none; stroke: #222; stroke-width: 2.500px; }
.scale-text { text-anchor: middle; font-size: 32.500px; fill: #222; }

.round { position: absolute; width: 80px; height: 80px; border-radius: 50%; background: #ececec; display: flex; align-items: center; justify-content: center; box-shadow: 0 2px 4px rgba(0,0,0,.35); color: #212121; }
.ghost { background: rgba(0,0,0,.12); box-shadow: none; color: #555; }
.tree-settings { left: 1629px; top: 20px; }
.lasso { left: 1536px; top: 20px; }
.lasso svg { width: 80px; height: 80px; }
.map-settings { left: 1626px; top: 20px; }
.history { left: 1656px; top: 480px; }

.land path { fill: #f2f2f0; }
.land .north { fill: #f6f6f4; }
.land .lake, .land .lake path { fill: #cdd3d3; }
.land .border { fill: none; stroke: #d3d3d2; stroke-width: 1.500px; vector-effect: non-scaling-stroke; }
.label { text-anchor: middle; font-size: 15.500px; fill: #7c7c7c; stroke: rgba(250,250,250,.75); stroke-width: 2.500px; paint-order: stroke; font-weight: 500; }
.label.minor { font-size: 12.500px; fill: #828282; }
.label.from { text-anchor: start; }
.sea, .sea-small { text-anchor: middle; fill: #8e9798; font-style: italic; font-size: 22px; letter-spacing: 5.500px; }
.sea-small { font-size: 16px; letter-spacing: 2px; text-anchor: start; }
.sea.mid { font-size: 16.500px; letter-spacing: 3px; }
.cases circle { fill: #9d89ba; stroke: #555; stroke-width: 3.500px; }

.legend { position: absolute; left: 20px; top: 20px; width: 120px; height: 120px; background: rgba(255,255,255,.9); box-shadow: 0 2px 8px rgba(0,0,0,.35); display: flex; align-items: center; justify-content: center; }
.legend i { width: 100px; height: 100px; border-radius: 50%; background: #9d89ba; border: 1.500px solid #555; }
.zoom { position: absolute; left: 1616px; top: 811px; width: 85px; height: 162px; border: 5px solid rgba(0,0,0,.2); border-radius: 10px; background: #fff; background-clip: padding-box; }
.zoom svg { width: 75px; height: 75px; fill: none; stroke: #000; stroke-width: 5.500px; }
.zoom svg:first-child { height: 77px; border-bottom: 2px solid #ccc; }
.attribution { position: absolute; right: 0; bottom: 0; height: 41px; padding: 0 11px 0 12px; line-height: 41px; background: rgba(255,255,255,.7); font-family: "Liberation Sans", Arial, sans-serif; font-size: 27.500px; color: #333; white-space: nowrap; }
.attribution a { color: #4274a8; }

.data { flex: 1; position: relative; }
.picker { position: absolute; left: 19px; top: -40px; width: 244px; height: 80px; border-radius: 40px; background: #ececec; box-shadow: 0 2px 5px rgba(0,0,0,.35); display: flex; align-items: center; padding-left: 26px; font-size: 30px; color: #444; z-index: 1; }
.picker svg { width: 38px; height: 22px; fill: #6b6b6b; margin-right: 16px; }
.caret { margin-left: 18px; border: 12px solid transparent; border-top: 0; border-bottom-color: #6b6b6b; }

.grid { display: grid; grid-template-columns: 169px 318px 100px 274px 149.500px 446.500px 201px 242px 1476px 79px; align-items: center; white-space: nowrap; overflow: hidden; }
.grid > * { padding-left: 15.500px; min-width: 0; }
.grid > .st { padding-left: 21px; }
.grid > .files { padding-left: 24px; display: flex; gap: 10px; }
.groups { height: 74px; font-size: 27.500px; }
.groups b, .chip { font-weight: 500; }
.chips { height: 58px; font-size: 27.500px; margin-top: -8px; margin-bottom: 6px; }
.chip { display: inline-block; height: 50px; line-height: 50px; padding: 0 13.500px 0 15.500px; margin-left: -15.500px; border-radius: 8px; background: #ececec; vertical-align: top; }
.grid > .name-head { padding-left: 20.500px; }
.chip.active { background: #603f8b; color: #fff; }
.fa { color: #603f8b; }
.gff { color: #689870; }
.row { height: 70px; border-top: 2px solid #dadbdc; }
.row:nth-child(even) { background: #f5f7f9; }
.row > * { line-height: 70px; height: 70px; margin-top: -2px; }
.row > .files { align-items: center; padding-top: 3px; }
.row > .name { padding-left: 20.500px; background: rgba(0,0,0,.1); color: #603f8b; font-weight: 700; }
.row .icon text { fill: #fff; font-size: 8.300px; font-weight: 700; text-anchor: middle; }
.thumb { position: absolute; left: 3429px; top: 140px; width: 17px; height: 55px; border-radius: 9px; background: #c1c1c1; }
```
FILE: app.js
```js
const NS = 'http://www.w3.org/2000/svg';

function add(parent, tag, attrs, text) {
  const el = document.createElementNS(NS, tag);
  for (const key in attrs) el.setAttribute(key, attrs[key]);
  if (text) el.textContent = text;
  parent.appendChild(el);
}

// Leaf positions, in tree units of the upper and lower halves of the tree
const upper = `606,46 736,54 920,63 497,71 398,78 520,87 581,95 668,103 596,111 726,120 681,128 632,136 643,145 704,153 668,161 679,169 577,178 632,186 606,194 600,202 588,211 566,219 577,227 590,236 556,246 638,252 555,261 562,269 825,277 722,285 863,293 790,302 839,310 687,318 736,326 699,334 693,344 687,352 687,360 690,368 675,377 675,384 675,392 675,400 675,408 687,417 710,426 711,430 711,434 711,442 711,446 711,450 711,458 711,466 711,470 711,474 711,482 711,490 724,500 735,508 724,516 690,524 737,533 611,541 634,549 643,557 632,566 722,574 624,582 666,590 990,598 720,607 634,615 632,623 650,631 649,640 617,650 510,657 624,665 690,674 598,682 598,690 696,698 562,706 680,714 713,722 390,732 400,740 378,748 609,756 670,764 658,772 476,781 570,789 546,797 562,805 655,813 655,821 680,830 642,838 652,847 716,855 690,863 693,871 713,879 594,888 606,896 1019,904 777,912 777,920 777,929 765,937 724,945 699,953 700,962 663,970 782,988 688,995 775,1003 690,1012 690,1020 703,1028 679,1037 679,1045 690,1053 700,1061 703,1069 703,1077 726,1086 752,1094 736,1102 715,1110 571,1120 598,1128 449,1136 484,1144 545,1152 508,1160 581,1168 642,1177 519,1185 551,1193 718,1202 718,1209 551,1218 527,1226 530,1235 551,1243 550,1251 540,1259 563,1268 553,1276 540,1284 540,1292 540,1300 540,1309 503,1318 563,1326 551,1334 551,1342 566,1351 590,1359 626,1367 530,1376 501,1384 538,1391`;
const lower = `570,176 345,184 356,192 335,200 688,217 665,225 653,233 653,242 642,250 642,258 759,267 642,275 688,292 688,300 688,308 c785,370 c775,378 c764,387 c755,395 803,350 1011,357 976,365 1152,374 1155,382 1165,390 1130,399 1130,407 1142,415 1213,424 1188,432 1165,440 1284,449 1294,457 1240,465 1384,473 1242,482 1217,490 1142,498 1142,506 1188,515 1188,523 1152,531 1023,540 1037,548 942,557 942,566 1056,573 1040,582 944,590 998,597 965,606 942,615 1011,623 972,631 976,639 938,648 984,656 1022,664 1030,672 1022,681 1022,689 1022,697 1022,705 1022,713 1035,722 1045,731 1035,739 1033,747 1206,755 1022,763 956,771 1154,779 1097,788 1050,796 1228,804 884,812 600,821 538,829 484,837 331,845 365,853 495,861 709,870 649,878 486,886 505,894 474,903 258,911 318,919 261,927 951,935 425,943 340,952 330,960 307,968 308,976 320,985 295,993 497,1001 318,1010 340,1018 318,1026 340,1034 284,1043 505,1051 366,1060 307,1068 307,1076 283,1084 337,1093 405,1101 393,1109 368,1117 368,1126 368,1134 357,1142 357,1150 486,1158 380,1167 380,1175 391,1183 366,1200 416,1208 342,1217 152,1225 152,1233 397,1242 80,1250 73,1258 228,1267 73,1275`;
const outliers = [[1551, 240], [1551, 243], [1551, 1057], [1388, 754], [829, 714], [838, 729], [1002, 709], [1012, 705], [1022, 702], [1030, 698], [1040, 696], [1024, 711]];

const leaves = document.getElementById('leaves');
function leaf(x, y) { add(leaves, 'rect', { x: x, y: y, width: 35, height: 35 }); }
function plot(list, x0, y0, sx) {
  for (const item of list.split(' ')) {
    const round = item[0] === 'c';
    const [x, y] = item.replace('c', '').split(',').map(Number);
    if (round) add(leaves, 'circle', { cx: x0 + x * sx, cy: y0 + y / 3, r: 17.5 });
    else leaf(x0 + x * sx + 0.5, y0 + y / 3);
  }
}
plot(upper, 140, 230, 0.38265);
plot(lower, 140, 660, 0.39541);
outliers.forEach(p => leaf(p[0], p[1]));

// Map labels by quadrant: x, baseline, text, class
const quads = [
  [1728, 160, 0.55102, [
    [1626, 66, 'Greenland', ''], [796, 1088, 'Canada', '']]],
  [1728, 680, 0.55102, [
    [894, 15, 'United', ''], [896, 73, 'States', ''], [838, 434, 'Mexico', ''], [1138, 480, 'Cuba', ''],
    [994, 620, 'Guatemala', 'minor'], [1064, 693, 'Nicaragua', 'minor'], [1124, 771, 'Panama', 'minor'],
    [1311, 798, 'Venezuela', ''], [1217, 878, 'Colombia', ''], [1438, 878, 'Suriname', 'minor'],
    [1148, 987, 'Ecuador', ''], [1495, 1166, 'Brazil', ''], [1189, 1178, 'Peru', ''], [1331, 1329, 'Bolivia', ''],
    [1407, 1470, 'Paraguay', 'minor'],
    [78, 32, 'North', 'sea'], [78, 138, 'Pacific', 'sea'], [78, 250, 'Ocean', 'sea']]],
  [2592, 160, 0.55038, [
    [353, 680, 'Iceland', ''], [822, 682, 'Sweden', ''], [932, 788, 'Finland', ''], [707, 858, 'Norway', ''],
    [926, 960, 'Estonia', 'minor'], [722, 1074, 'Denmark', ''], [903, 1088, 'Lithuania', 'minor'],
    [563, 1110, 'United', ''], [563, 1167, 'Kingdom', ''], [956, 1163, 'Belarus', ''], [843, 1215, 'Poland', ''],
    [722, 1248, 'Germany', ''], [998, 1308, 'Ukraine', ''], [627, 1356, 'France', ''], [778, 1361, 'Austria', 'minor'],
    [1463, 1346, 'Kazakhstan', ''], [809, 1421, 'Croatia', 'minor'], [916, 1418, 'Romania', ''],
    [919, 1508, 'Bulgaria', 'minor'], [757, 1518, 'Italy', ''], [1340, 1540, 'Uzbekistan', 'from'],
    [540, 1552, 'Spain', ''], [124, 1468, 'North', 'sea']]],
  [2592, 680, 0.55038, [
    [1210, 12, 'Azerbaijan', 'minor'], [1047, 55, 'Turkey', ''], [897, 68, 'Greece', ''], [717, 186, 'Tunisia', ''],
    [516, 232, 'Morocco', ''], [1153, 212, 'Iraq', ''], [1295, 225, 'Iran', ''], [1446, 193, 'Afghanistan', ''],
    [1208, 303, 'Kuwait', 'minor'], [1468, 333, 'Pakistan', ''], [627, 334, 'Algeria', ''], [826, 361, 'Libya', ''],
    [979, 374, 'Egypt', ''], [416, 393, 'Western', 'minor'], [416, 438, 'Sahara', 'minor'],
    [1168, 430, 'Saudi Arabia', ''], [1331, 494, 'Oman', ''], [457, 531, 'Mauritania', ''], [577, 585, 'Mali', ''],
    [715, 584, 'Niger', ''], [834, 629, 'Chad', ''], [402, 632, 'Senegal', ''], [981, 663, 'Sudan', ''],
    [1092, 618, 'Eritrea', 'minor'], [1209, 617, 'Yemen', ''], [573, 694, 'Burkina Faso', 'minor'],
    [1143, 705, 'Djibouti', 'minor'], [451, 726, 'Guinea', 'minor'], [698, 755, 'Nigeria', ''],
    [1105, 777, 'Ethiopia', ''], [858, 794, 'Central African', 'minor'], [858, 840, 'Republic', 'minor'],
    [579, 810, 'Ghana', 'minor'], [893, 928, 'Democratic', ''], [893, 985, 'Republic of', ''],
    [893, 1044, 'the Congo', ''], [746, 971, 'Gabon', 'minor'], [1082, 949, 'Kenya', ''], [1043, 1095, 'Tanzania', ''],
    [824, 1221, 'Angola', ''], [948, 1263, 'Zambia', ''], [981, 1378, 'Zimbabwe', ''], [1197, 1382, 'Madagascar', ''],
    [1342, 1398, 'Mauritius', 'minor'], [816, 1424, 'Namibia', ''], [1486, 890, 'Maldives', 'from'],
    [124, 20, 'Atlantic', 'sea'], [126, 127, 'Ocean', 'sea'], [1413, 608, 'Arabian', 'sea mid'],
    [1413, 686, 'Sea', 'sea mid'], [402, 1480, 'South', 'sea'], [1618, 1424, 'Indian', 'sea']]]
];
const labels = document.getElementById('labels');
for (const [x0, y0, sx, list] of quads)
  for (const [x, y, text, kind] of list)
    add(labels, 'text', { x: x0 + x * sx, y: y0 + y / 3, class: kind.startsWith('sea') ? kind : 'label ' + kind }, text);

const P = '3_3_1_1_1_1_79';
const records = [
  ['SAMN31713201', '*ee3c', '0_0_105_6_?_?_?_?_?_?', 'ColRNAI; IncFIA(HI1); IncFIB(K); IncFII(K); IncX3; pKPC-CAV1193', 'KL107'],
  ['SAMN30197955', '*ee3c', '0_0_105_6_?_?_?_?_?_?', 'ColRNAI; IncFIA(HI1); IncFIB(K); IncFII(K); IncX3; pKPC-CAV1193', 'KL107'],
  ['SRR15167065', '814', '0_0_105_6_0_0_17_15_1_0', 'IncFIB(K); IncFII(K); repB(R1701)', 'KL107'],
  ['SAMN29894081', '*fa67', '0_0_105_6_0_0_17_?_?_?', 'IncFIB(K); IncFII(K); repB(R1701)', 'KL107'],
  ['SAMN32075745', '*da89', '0_0_105_6_?_?_?_?_?_?', 'ColRNAI; IncFIB(K); IncFII(K); repB(R1701)', 'unknown'],
  ['SAMN33190943', '*d2c8', '0_0_105_6_0_0_17_5_?_?', 'ColRNAI; IncFIB(K); IncFII(K); IncI2(Delta); IncR; repB(R1701)', 'unknown'],
  null
];
const file = ext => `<svg class="icon ${ext}" viewBox="0 0 24 24"><path d="M14 2H6c-1.100 0-2 .9-2 2v16c0 1.100.9 2 2 2h12c1.100 0 2-.9 2-2V8l-6-6zm-1 7V3.500L18.500 9H13z"/><text x="12" y="18.800">.${ext}</text></svg>`;
document.getElementById('rows').innerHTML = records.map(r => {
  const files = `<div class="files">${file('fa')}${file('gff')}</div>`;
  if (!r) return `<div class="grid row">${files}<div class="name"></div></div>`;
  const cells = [P, r[1], r[2], '258', '258', r[3], r[4]].map(c => `<div>${c}</div>`).join('');
  return `<div class="grid row">${files}<div class="name">${r[0]}</div><div class="st">258</div>${cells}</div>`;
}).join('');
```
